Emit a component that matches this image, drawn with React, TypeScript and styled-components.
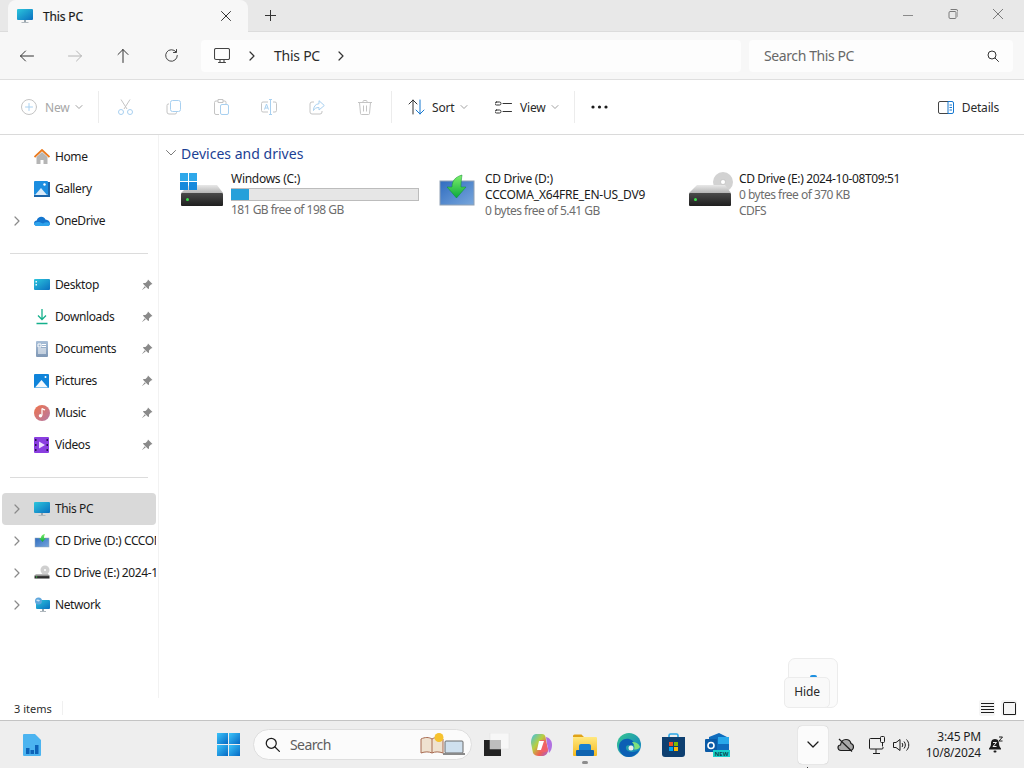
import React from "react";
import styled, { createGlobalStyle } from "styled-components";

const Global = createGlobalStyle`
  html, body { margin: 0; padding: 0; width: 1024px; height: 768px; overflow: hidden; background: #fff; }
  * { box-sizing: border-box; }
  body { font-family: "Noto Sans", "Liberation Sans", sans-serif; color: #1b1b1b; font-size: 12px; }
  svg { display: block; flex: none; }
`;

const Screen = styled.div`
  position: relative; width: 1024px; height: 768px; display: flex; flex-direction: column; overflow: hidden;
`;
const TitleBar = styled.div`
  height: 32px; background: #e8e8e8; display: flex; align-items: flex-end; padding-left: 8px; flex: none; border-bottom: 1px solid #dcdcdc;
`;
const Tab = styled.div`
  width: 240px; height: 32px; margin-bottom: -1px; background: #f7f7f7; border-radius: 8px 8px 0 0; display: flex; align-items: center; padding: 0 17px 0 9px;
`;
const TabTitle = styled.span`
  margin-left: 10px; flex: 1; font-size: 12px; letter-spacing: -0.15px; color: #1a1a1a; -webkit-text-stroke: 0.2px #1a1a1a;
`;
const NewTab = styled.div`
  margin: 0 0 7px 17px; width: 11px; height: 18px; display: flex; align-items: center;
`;
const WindowControls = styled.div`
  margin-left: auto; align-self: flex-start; display: flex; height: 32px; align-items: center; padding-right: 21px; gap: 35px; margin-top: -2px;
`;
const NavRow = styled.div`
  height: 48px; flex: none; background: #f7f7f7; border-bottom: 1px solid #dfdfdf; display: flex; align-items: center; padding: 0 11px 0 3px;
`;
const NavButton = styled.div`
  width: 48px; height: 32px; display: flex; align-items: center; justify-content: center;
`;
const AddressBox = styled.div`
  width: 540px; height: 32px; margin-left: 6px; background: #fdfdfd; border-radius: 4px; display: flex; align-items: center; padding-left: 13px;
`;
const CrumbGap = styled.span`
  width: 18px; flex: none;
`;
const Crumb = styled.span`
  font-size: 14px; color: #2b2b2b; margin: 0 17px 0 18px; letter-spacing: -0.25px;
`;
const SearchBox = styled.div`
  width: 264px; height: 32px; margin-left: 8px; background: #fdfdfd; border-radius: 4px; display: flex; align-items: center; justify-content: space-between; padding: 0 14px 0 15px;
  font-size: 14px; letter-spacing: -0.4px; color: #686868;
`;
const CommandBar = styled.div`
  height: 55px; flex: none; background: #fff; border-bottom: 1px solid #dadada; display: flex; align-items: center; padding-left: 21px; font-size: 12px;
`;
const CmdLabel = styled.span<{ $off?: boolean; $gap?: number }>`
  color: ${(p) => (p.$off ? "#a6a6a6" : "#2a2a2a")}; margin: 0 5px 0 ${(p) => p.$gap ?? 7}px; letter-spacing: -0.15px;
`;
const CmdGroup = styled.div<{ $w: number; $pad?: number }>`
  width: ${(p) => p.$w}px; padding-left: ${(p) => p.$pad ?? 0}px; display: flex; align-items: center; flex: none;
`;
const CmdIcon = styled.div`
  width: 48px; height: 32px; display: flex; align-items: center; justify-content: center; flex: none;
`;
const Sep = styled.div<{ $after?: number }>`
  width: 1px; height: 32px; background: #ececec; flex: none; margin-right: ${(p) => p.$after ?? 0}px;
`;
const SepSpace = styled.span`
  width: 2px; flex: none;
`;
const DetailsButton = styled.div`
  margin-left: auto; padding-right: 25px; display: flex; align-items: center;
`;
const DetailsLabel = styled.span`
  margin-left: 8px; color: #2a2a2a; letter-spacing: -0.2px;
`;
const Body = styled.div`
  flex: 1; display: flex; min-height: 0;
`;
const Sidebar = styled.nav`
  width: 159px; flex: none; border-right: 1px solid #f2f2f2; padding: 6px 2px 0; display: flex; flex-direction: column; height: 563px;
`;
const NavItem = styled.div<{ $active?: boolean }>`
  height: 32px; flex: none; display: flex; align-items: center; border-radius: 4px; background: ${(p) => (p.$active ? "#d9d9d9" : "transparent")}; overflow: hidden; position: relative;
`;
const Chevron = styled.div`
  width: 32px; display: flex; justify-content: center; padding-right: 3px; flex: none;
`;
const NavLabel = styled.span`
  margin-left: 5px; padding-bottom: 2px; white-space: nowrap; overflow: hidden; letter-spacing: -0.4px; color: #1b1b1b; flex: 1;
`;
const Pin = styled.div`
  margin-right: 3px; flex: none;
`;
const Divider = styled.div`
  height: 32px; flex: none; display: flex; align-items: center; padding: 0 8px;
  &::after { content: ""; flex: 1; height: 1px; background: #dcdcdc; }
`;
const Main = styled.main`
  flex: 1; padding: 7px 0 0 7px; min-width: 0;
`;
const GroupHeader = styled.div`
  display: flex; align-items: center; gap: 5px; height: 22px; font-size: 14px; color: #1c3f94; letter-spacing: 0.02px;
`;
const DriveGrid = styled.div`
  display: grid; grid-template-columns: repeat(3, 254px); margin: 7px 0 0 14px;
`;
const Drive = styled.div`
  display: flex; height: 48px; font-size: 12px; line-height: 16px;
`;
const DriveIconSlot = styled.div`
  width: 51px; flex: none; height: 40px; padding-top: 1px;
`;
const DriveText = styled.div`
  min-width: 0; white-space: nowrap;
`;
const DriveName = styled.div<{ $spacing?: number }>`
  color: #1a1a1a; letter-spacing: ${(p) => p.$spacing ?? -0.28}px;
`;
const DriveNote = styled.div`
  color: #6d6d6d; letter-spacing: -0.52px;
`;
const Meter = styled.div`
  width: 188px; height: 13px; background: #e6e6e6; border: 1px solid #bcbcbc; margin: 1px 0; border-width: 1px 1px 1px 0;
`;
const MeterFill = styled.div`
  height: 100%; background: #26a0da;
`;
const StatusBar = styled.div`
  height: 22px; flex: none; display: flex; align-items: center; padding: 0 7px 2px 14px; font-size: 11px; color: #2c2c2c; position: relative;
`;
const StatusSep = styled.span`
  width: 1px; height: 14px; margin-left: 10px; background: #f0f0f0;
`;
const ViewToggles = styled.div`
  margin-left: auto; display: flex; gap: 6px;
`;
const ViewToggle = styled.div`
  width: 16px; height: 16px; background: #f5f5f5; border-radius: 2px; display: flex; align-items: center; justify-content: center;
`;
const Taskbar = styled.footer`
  height: 48px; flex: none; background: #eeeeee; border-top: 1px solid #c4c4c4; display: flex; align-items: center; position: relative;
`;
const TaskSlot = styled.div<{ $w: number; $pad?: number }>`
  width: ${(p) => p.$w}px; padding-left: ${(p) => p.$pad ?? 0}px; height: 47px; flex: none; display: flex; align-items: center; justify-content: center; position: relative;
`;
const RunDot = styled.div`
  position: absolute; left: 50%; margin-left: -3px; bottom: 4px; width: 6px; height: 3px; border-radius: 2px; background: #8c8c8c;
`;
const TaskSearch = styled.div`
  width: 219px; height: 31px; margin: 0 3px 0 3px; flex: none; background: #fbfbfb; border: 1px solid #dedede; border-radius: 16px; display: flex; align-items: center; padding: 0 5px 0 11px; font-size: 14px; color: #5e5e5e; letter-spacing: -0.6px;
`;
const TaskSearchText = styled.span`
  margin-left: 10px; padding-bottom: 1px; flex: 1;
`;
const TrayMore = styled.div`
  width: 30px; height: 38px; margin-left: 59px; background: #fbfbfb; border-radius: 4px; box-shadow: 0 0 1px rgba(0,0,0,.3); display: flex; align-items: center; justify-content: center; flex: none; position: relative;
  &::after { content: ""; position: absolute; left: 9px; bottom: -4px; width: 1px; height: 1px; background: #333; }
`;
const Clock = styled.div`
  width: 56px; margin-left: 14px; text-align: right; font-size: 12px; line-height: 16px; color: #1e1e1e; letter-spacing: -0.2px; flex: none;
`;
const FlyoutBack = styled.div`
  position: absolute; left: 788px; top: 658px; width: 50px; height: 50px; background: #fbfbfb; border: 1px solid #ececec; border-radius: 7px;
`;
const Tooltip = styled.div`
  position: absolute; left: 784px; top: 677px; width: 46px; height: 31px; background: #f9f9f9; border: 1px solid #ececec; border-radius: 5px; font-size: 12px; display: flex; align-items: center; justify-content: center; padding-bottom: 2px; color: #2a2a2a; letter-spacing: -0.1px;
`;
const FlyoutBlip = styled.div`
  position: absolute; left: 810px; top: 675px; width: 7px; height: 2px; background: #1e90e0; border-radius: 3px 3px 0 0;
`;

/* ---------- icons ---------- */
const Line = ({ d, c = "#1f1f1f", w = 16, h = 16, vb = "0 0 16 16", sw = 1 }: { d: string; c?: string; w?: number; h?: number; vb?: string; sw?: number }) => (
  <svg width={w} height={h} viewBox={vb} fill="none" stroke={c} strokeWidth={sw} strokeLinecap="round" strokeLinejoin="round"><path d={d} /></svg>
);
const Defs = () => (
  <svg width="0" height="0" style={{ position: "absolute" }}>
    <defs>
      <linearGradient id="mon" x1="0" y1="0" x2="1" y2="1"><stop offset="0" stopColor="#2cc6dc" /><stop offset="1" stopColor="#0a6fc0" /></linearGradient>
      <linearGradient id="win" x1="0" y1="0" x2="1" y2="1"><stop offset="0" stopColor="#3bc4fa" /><stop offset="1" stopColor="#0669c4" /></linearGradient>
      <linearGradient id="diskTop" x1="0" y1="0" x2="0" y2="1"><stop offset="0" stopColor="#e8e8e8" /><stop offset="1" stopColor="#b4b4b4" /></linearGradient>
      <linearGradient id="diskBody" x1="0" y1="0" x2="0" y2="1"><stop offset="0" stopColor="#4a4a4a" /><stop offset="1" stopColor="#1e1e1e" /></linearGradient>
      <linearGradient id="grn" x1="0" y1="0" x2="0" y2="1"><stop offset="0" stopColor="#7ef06a" /><stop offset="1" stopColor="#0aa83c" /></linearGradient>
      <linearGradient id="scr" x1="0" y1="0" x2="1" y2="1"><stop offset="0" stopColor="#2f6cc0" /><stop offset="1" stopColor="#79a7dc" /></linearGradient>
      <linearGradient id="music" x1="0" y1="0" x2="1" y2="1"><stop offset="0" stopColor="#f0734a" /><stop offset="1" stopColor="#b47aa8" /></linearGradient>
      <linearGradient id="folder" x1="0" y1="0" x2="0" y2="1"><stop offset="0" stopColor="#ffe880" /><stop offset="1" stopColor="#f6b91e" /></linearGradient>
      <linearGradient id="cop" x1="0" y1="0" x2="1" y2="1"><stop offset="0" stopColor="#3fc0e8" /><stop offset=".4" stopColor="#b8d040" /><stop offset=".7" stopColor="#f06050" /><stop offset="1" stopColor="#a060d8" /></linearGradient>
      <linearGradient id="edge" x1="0" y1="0" x2="1" y2="1"><stop offset="0" stopColor="#37c890" /><stop offset="1" stopColor="#0c78c8" /></linearGradient>
      <linearGradient id="docs" x1="0" y1="0" x2="0" y2="1"><stop offset="0" stopColor="#a9bfd8" /><stop offset="1" stopColor="#7f97b5" /></linearGradient>
    </defs>
  </svg>
);
const MonitorColor = ({ s = 16 }: { s?: number }) => (
  <svg width={s} height={s} viewBox="0 0 16 16">
    <rect x="0" y="1" width="16" height="11" rx="1" fill="url(#mon)" />
    <rect x="7" y="12" width="2" height="2" fill="#9aa6ae" /><rect x="4.5" y="14" width="7" height="1" fill="#b0b8be" />
  </svg>
);
const HomeIcon = () => (
  <svg width="16" height="16" viewBox="0 0 16 16">
    <path d="M2.5 8 8 3l5.5 5v7h-4v-4h-3v4h-4z" fill="#b5b5b5" />
    <path d="M.5 8 8 1l7.5 7" fill="none" stroke="#ea7a1e" strokeWidth="1.8" />
  </svg>
);
const GalleryIcon = () => (
  <svg width="16" height="16" viewBox="0 0 16 16">
    <rect x="14" y="1" width="2" height="15" fill="#1c64a8" />
    <rect x="0" y="14" width="16" height="2" fill="#1c64a8" />
    <rect x="0" y="0" width="14" height="14" rx="1" fill="#1c8ee0" />
    <path d="M1 14 7 7l6 7z" fill="#dcebf8" /><circle cx="10.5" cy="3.5" r="1.2" fill="#fff" />
  </svg>
);
const CloudIcon = () => (
  <svg width="16" height="16" viewBox="0 0 16 16">
    <path d="M3 13C1 13 0 11.600 0 10.300 0 8.800 1.200 7.600 2.700 7.600 3.400 5 5.300 3.800 7.300 3.800c2 0 3.400 1 4.100 2.800C14 6.700 16 8.700 16 10.500 16 12 15 13 13.500 13z" fill="#1476cf" />
    <path d="M3 13c-1.700 0-3-1-3-2.700 3-2 6-1.500 9 .3 2.500-1.500 5-1.800 7 0C16 12 15 13 13.500 13z" fill="#2ea3ec" />
  </svg>
);
const DesktopIcon = () => (
  <svg width="16" height="16" viewBox="0 0 16 16">
    <rect y="2" width="16" height="11" rx="1" fill="url(#mon)" />
    <rect x="1.500" y="4" width="1.500" height="1.500" fill="#e6f6fc" /><rect x="1.500" y="7" width="1.500" height="1.500" fill="#e6f6fc" />
  </svg>
);
const DownloadIcon = () => (
  <svg width="16" height="16" viewBox="0 0 16 16" fill="none" stroke="#14b08c" strokeWidth="1.300">
    <path d="M8 0v10M4 6.500 8 10.500l4-4" /><path d="M2.500 14.500h11" strokeWidth="1.500" />
  </svg>
);
const DocsIcon = () => (
  <svg width="16" height="16" viewBox="0 0 16 16">
    <rect x="2" y="0" width="12" height="16" rx="1" fill="url(#docs)" />
    <path d="M4 3h3v3H4zM8 3.500h4M8 5.500h4M4 8h8M4 10h8M4 12h8" stroke="#fff" strokeWidth="1" fill="none" />
  </svg>
);
const PicturesIcon = () => (
  <svg width="16" height="16" viewBox="0 0 16 16">
    <rect y="1" width="15" height="14" rx="1" fill="#0f84da" />
    <path d="M1 14.500 7.500 7l6.500 7.500z" fill="#f4f9fd" /><circle cx="11.500" cy="4" r="1" fill="#fff" />
  </svg>
);
const MusicIcon = () => (
  <svg width="16" height="16" viewBox="0 0 16 16">
    <circle cx="8" cy="8" r="8" fill="url(#music)" />
    <path d="M8 3.500v7" stroke="#fff" strokeWidth="1.200" /><path d="M8 3.500c1 1 2.300 1 3 1.500" stroke="#fff" strokeWidth="1.200" fill="none" />
    <circle cx="6.500" cy="10.800" r="1.700" fill="#fff" />
  </svg>
);
const VideoIcon = () => (
  <svg width="16" height="16" viewBox="0 0 16 16">
    <rect width="15" height="16" x="0" rx="1" fill="#8a3ee0" />
    <path d="M1 2h1.500v2H1zM1 7h1.500v2H1zM1 12h1.500v2H1zM12.500 2H14v2h-1.500zM12.500 7H14v2h-1.500zM12.500 12H14v2h-1.500z" fill="#2a1450" />
    <path d="M5 4.500 11 8l-6 3.500z" fill="#ecdcff" />
  </svg>
);
const MiniD = () => (
  <svg width="16" height="16" viewBox="0 0 16 16">
    <rect x="1" y="5" width="14" height="9" fill="url(#scr)" stroke="#9ab" strokeWidth=".5" />
    <path d="M11 1 C8 1.500 7 3 7 5H5l3.500 4L12 5h-2c0-1.500.3-2.500 1-4z" fill="url(#grn)" />
  </svg>
);
const MiniE = () => (
  <svg width="16" height="16" viewBox="0 0 16 16">
    <circle cx="11" cy="5" r="4.500" fill="#cfcfcf" /><circle cx="11" cy="5" r="1" fill="#fff" />
    <path d="M2 9h12l1.500 1.500h-15z" fill="#b8b8b8" /><rect x="0.500" y="10.500" width="15" height="3" fill="url(#diskBody)" />
    <rect x="2" y="11.500" width="1.200" height="1" fill="#3de04a" />
  </svg>
);
const NetworkIcon = () => (
  <svg width="16" height="16" viewBox="0 0 16 16">
    <rect x="2" y="3" width="14" height="9" rx="1" fill="url(#mon)" />
    <rect x="8" y="12" width="2" height="2" fill="#9aa6ae" /><rect x="6" y="14" width="6" height="1" fill="#b0b8be" />
    <circle cx="4.500" cy="4" r="3.500" fill="#5ea6dc" /><path d="M2 3c1.500-1 3-.5 4 .5-1 1.500-3 1-4-.5z" fill="#c7e2f6" />
  </svg>
);
const PinIcon = () => (
  <svg width="12" height="12" viewBox="0 0 12 12"><path d="M7 .5 11.500 5 10 5.500 8 7.500 8 10 6.700 9.500 2.500 5.300 2 4 4.500 4 6.500 2zM3.800 7.200.8 11.200l4-3z" fill="#8a8a8a" /></svg>
);
const ChevR = ({ c = "#8a8a8a" }: { c?: string }) => <Line w={8} h={10} vb="0 0 8 10" c={c} sw={1.200} d="M2 1l4 4-4 4" />;
const ChevDown = () => <Line w={8} h={6} vb="0 0 8 6" c="#a0a0a0" d="M1 1.500 4 4.500 7 1.500" />;

const WinLogo = ({ s }: { s: number }) => (
  <svg width={s} height={s} viewBox="0 0 23 23">
    <rect width="11" height="11" fill="url(#win)" /><rect x="12" width="11" height="11" fill="url(#win)" />
    <rect y="12" width="11" height="11" fill="url(#win)" /><rect x="12" y="12" width="11" height="11" fill="url(#win)" />
  </svg>
);
const HddBase = () => (
  <g>
    <path d="M9 13h28l6 8H1z" fill="url(#diskTop)" />
    <rect x="1" y="21" width="42" height="13" rx="1" fill="url(#diskBody)" />
    <rect x="6" y="26" width="3" height="3" rx="1.500" fill="#39e04a" />
  </g>
);
const DriveC = () => (
  <svg width="44" height="36" viewBox="0 0 44 36">
    <HddBase />
    <g transform="translate(0,1)">
      <rect width="8" height="8" fill="#2ea8ea" /><rect x="9" width="8" height="8" fill="#2ea8ea" /><rect y="9" width="8" height="8" fill="#1689dc" /><rect x="9" y="9" width="8" height="8" fill="#1689dc" />
    </g>
  </svg>
);
const DriveD = () => (
  <svg width="44" height="36" viewBox="0 0 44 36">
    <rect x="6" y="9" width="34" height="24" fill="url(#scr)" stroke="#8fa0b4" />
    <path d="M28 3C21 5 18 9 18 15h-5l9.500 11L32 15h-5c0-5 .5-8 1-12z" fill="url(#grn)" stroke="#0a8c34" strokeWidth=".5" />
  </svg>
);
const DriveE = () => (
  <svg width="46" height="36" viewBox="0 0 46 36">
    <circle cx="35" cy="10" r="10" fill="#d2d2d2" /><circle cx="35" cy="10" r="2.500" fill="#fff" stroke="#aaa" strokeWidth=".5" />
    <HddBase />
  </svg>
);
const TaskWidgets = () => (
  <svg width="18" height="22" viewBox="0 0 18 22">
    <path d="M1 0h11l6 6v15a1 1 0 0 1-1 1H1a1 1 0 0 1-1-1V1a1 1 0 0 1 1-1z" fill="#4cb4f0" />
    <rect x="3" y="14" width="3.500" height="6" fill="#0d63b8" /><rect x="7.500" y="16" width="3.500" height="4" fill="#0d63b8" /><rect x="12" y="11" width="3.500" height="9" fill="#0d63b8" />
  </svg>
);
const BookLaptop = () => (
  <svg width="46" height="24" viewBox="0 0 46 24">
    <path d="M1 6c4-2 8-2 11 0 3-2 7-2 11 0v14c-4-1.500-8-1.500-11 0-3-1.500-7-1.500-11 0z" fill="#efe2d0" stroke="#a86a50" />
    <path d="M12 6v14" stroke="#a86a50" />
    <circle cx="19" cy="4.500" r="4.500" fill="#f6c22e" />
    <rect x="25" y="8" width="18" height="12" rx="1" fill="#cfe0ee" stroke="#6a6a6a" />
    <rect x="23" y="20" width="22" height="2" fill="#8a8a8a" />
  </svg>
);
const TaskView = () => (
  <svg width="26" height="24" viewBox="0 0 26 24">
    <rect x="0" y="7" width="17" height="16" fill="#232323" />
    <rect x="6" y="0" width="19" height="16" fill="#f8f8f8" opacity=".9" stroke="#e0e0e0" strokeWidth=".5" />
    <rect x="6" y="7" width="11" height="9" fill="#bdbdbd" />
  </svg>
);
const Copilot = () => (
  <svg width="23" height="24" viewBox="0 0 23 24">
    <path d="M6 1h6c2 0 3 1 3.500 3L18 18c-.5 3-3 5-6 5H9c-3 0-5-1-6-3L1 10c0-5 2-9 5-9z" fill="url(#cop)" />
    <path d="M10 7h5l3 9c.5 2-1 3-3 3h-5z" fill="#f25f6a" opacity=".85" />
    <path d="M16 4c4 1 6 4 6 8 0 3-1 6-3 8l-2-9z" fill="#b070e0" />
    <path d="M9 8h5l-3 9H7z" fill="#fff" />
  </svg>
);
const Explorer = () => (
  <svg width="24" height="22" viewBox="0 0 24 22">
    <path d="M0 2a1.500 1.500 0 0 1 1.500-1.500h7L11 3h-11z" fill="#e0a218" />
    <rect y="3" width="24" height="19" rx="1" fill="url(#folder)" />
    <path d="M6 12a2 2 0 0 1 2-2h8a2 2 0 0 1 2 2v4H6z" fill="#1a7fd0" /><rect x="3" y="16" width="18" height="6" rx="1" fill="#0f63b0" />
  </svg>
);
const Edge = () => (
  <svg width="24" height="24" viewBox="0 0 24 24">
    <circle cx="12" cy="12" r="12" fill="url(#edge)" />
    <path d="M2 14c0-6 5-9 10-8 4 1 6 4 5 6-3 1-7-1-8 2-1 3 3 5 7 5 2 0 4-1 6-2-2 4-6 7-10 7-6 0-10-5-10-10z" fill="#0b5fb4" />
    <path d="M15 9c3 0 7 1 8 5-1 2-3 2.500-6 2.500 1-2 .5-5-2-7.500z" fill="#7fe07c" />
    <circle cx="14" cy="15" r="2.500" fill="#eeeeee" />
  </svg>
);
const Store = () => (
  <svg width="23" height="24" viewBox="0 0 23 24">
    <path d="M7 5V2.500C7 1.500 7.500 1 8.500 1h6c1 0 1.500.5 1.500 1.500V5" fill="none" stroke="#2aa6e8" strokeWidth="1.600" />
    <path d="M0 4h23v17a3 3 0 0 1-3 3H3a3 3 0 0 1-3-3z" fill="#0e3f70" />
    <rect x="7" y="9" width="4" height="4" fill="#f25022" /><rect x="12" y="9" width="4" height="4" fill="#7fba00" />
    <rect x="7" y="14" width="4" height="4" fill="#00a4ef" /><rect x="12" y="14" width="4" height="4" fill="#ffb900" />
  </svg>
);
const Outlook = () => (
  <svg width="25" height="24" viewBox="0 0 25 24">
    <path d="M4 4 14 0l10 5v13H4z" fill="#0f6cbd" /><path d="M13 4h11v7H13z" fill="#28a8ea" />
    <rect x="0" y="6" width="12" height="13" rx="1" fill="#0a5aa6" />
    <circle cx="6" cy="12.500" r="3" fill="none" stroke="#fff" strokeWidth="1.600" />
    <rect x="8" y="17" width="17" height="7" fill="#18d0cc" />
    <text x="16.500" y="22.800" textAnchor="middle" fontSize="6" fontWeight="700" fontFamily="Noto Sans, sans-serif" fill="#0a4a52">NEW</text>
  </svg>
);
const CloudOff = () => (
  <svg width="17" height="14" viewBox="0 0 17 14" fill="#a8a8a8" stroke="#1c1c1c" strokeWidth="1.200">
    <path d="M4 12.500C2 12.500 1 11 1 9.500 1 8 2 7 3.500 7 4 3.500 6.500 1.500 9 1.500c2.500 0 4.500 2 5 4 1.500.5 2.500 1.800 2.500 3.300 0 2-1.500 3.700-3.500 3.700z" />
    <path d="M2 1l13 12.500" fill="none" />
  </svg>
);
const NetCable = () => (
  <svg width="17" height="18" viewBox="0 0 17 18" fill="none" stroke="#1c1c1c" strokeWidth="1">
    <path d="M11 2.500H1.500a1 1 0 0 0-1 1V12a1 1 0 0 0 1 1H13a1 1 0 0 0 1-1v-1" /><path d="M7 13v4M4 17.500h7" />
    <rect x="11.500" y=".5" width="4" height="6" rx="1" /><path d="M13.500 6.500v4" />
  </svg>
);
const Speaker = () => (
  <svg width="17" height="14" viewBox="0 0 17 14" fill="none" stroke="#1c1c1c" strokeWidth="1">
    <path d="M.5 4.500h2.500L7 1.500v11L3 9.500H.5z" /><path d="M9 5c1 1.200 1 2.800 0 4M11 3.500c1.800 2 1.800 5 0 7M13.500 1.500c3 3 3 8 0 11" />
  </svg>
);
const Bell = () => (
  <svg width="16" height="18" viewBox="0 0 16 18">
    <path d="M7 3C3.500 3 3 6 3 8c0 2-1 3-2 4.500v1h12v-1c-1-1.500-2-2.500-2-4.500 0-2-.5-5-4-5z" fill="#1c1c1c" />
    <rect x="5.500" y="14.500" width="3" height="2" rx="1" fill="#1c1c1c" />
    <path d="M5 6.500h3.500L5 10.500h3.500" stroke="#eee" strokeWidth="1" fill="none" />
    <path d="M11 1h3.500L11 5h3.500" stroke="#1c1c1c" strokeWidth="1" fill="none" />
  </svg>
);
const Search = ({ s = 12, c = "#333" }: { s?: number; c?: string }) => (
  <svg width={s} height={s} viewBox="0 0 12 12" fill="none" stroke={c} strokeWidth="1"><circle cx="5" cy="5" r="4" /><path d="M8 8l3.500 3.500" strokeLinecap="round" /></svg>
);

const blue = "#a8d0f0";
const off = "#c4c4c4";

const navTop = [
  { label: "Home", icon: <HomeIcon /> },
  { label: "Gallery", icon: <GalleryIcon /> },
  { label: "OneDrive", icon: <CloudIcon />, chev: true },
];
const navPinned = [
  { label: "Desktop", icon: <DesktopIcon /> },
  { label: "Downloads", icon: <DownloadIcon /> },
  { label: "Documents", icon: <DocsIcon /> },
  { label: "Pictures", icon: <PicturesIcon /> },
  { label: "Music", icon: <MusicIcon /> },
  { label: "Videos", icon: <VideoIcon /> },
];
const navDevices = [
  { label: "This PC", icon: <MonitorColor />, active: true },
  { label: "CD Drive (D:) CCCOMA_X64FRE_EN-US_DV9", icon: <MiniD /> },
  { label: "CD Drive (E:) 2024-10-08T09:51", icon: <MiniE /> },
  { label: "Network", icon: <NetworkIcon /> },
];

export default function App() {
  return (
    <Screen>
      <Global />
      <Defs />
      <TitleBar>
        <Tab>
          <MonitorColor />
          <TabTitle>This PC</TabTitle>
          <Line w={10} h={10} vb="0 0 10 10" c="#333" d="M.5.5l9 9M9.500.5l-9 9" />
        </Tab>
        <NewTab><Line w={11} h={11} vb="0 0 11 11" c="#333" d="M5.500 0v11M0 5.500h11" /></NewTab>
        <WindowControls>
          <Line w={10} h={10} vb="0 0 10 10" c="#8a8a8a" d="M0 6.500h10" />
          <Line w={10} h={10} vb="0 0 10 10" c="#7a7a7a" d="M1 3.500a1 1 0 0 1 1-1h5a1 1 0 0 1 1 1v5a1 1 0 0 1-1 1H2a1 1 0 0 1-1-1zM3 .5h5a2 2 0 0 1 2 2v5" />
          <Line w={10} h={10} vb="0 0 10 10" c="#7a7a7a" d="M0 0l10 10M10 0 0 10" />
        </WindowControls>
      </TitleBar>
      <NavRow>
        <NavButton><Line w={14} h={12} vb="0 0 14 12" c="#333" d="M13.500 6H.5M5.500 1 .5 6l5 5" /></NavButton>
        <NavButton><Line w={14} h={12} vb="0 0 14 12" c="#b4b4b4" d="M.5 6h13M8.500 1l5 5-5 5" /></NavButton>
        <NavButton><Line w={12} h={14} vb="0 0 12 14" c="#333" d="M6 13.500V.5M1 5.500 6 .5l5 5" /></NavButton>
        <NavButton><Line w={13} h={13} vb="0 0 13 13" c="#444" d="M11 2.800A5.800 5.800 0 1 0 12.300 6.500M11.500.5v3h-3" /></NavButton>
        <AddressBox>
          <Line w={16} h={15} vb="0 0 16 15" c="#444" sw={1.100} d="M2 .5h12A1.500 1.500 0 0 1 15.500 2v8a1.500 1.500 0 0 1-1.500 1.500H2A1.500 1.500 0 0 1 .5 10V2A1.500 1.500 0 0 1 2 .5zM6 11.500v2.500M10 11.500v2.500M4.500 14.500h7" />
          <CrumbGap />
          <ChevR c="#333" />
          <Crumb>This PC</Crumb>
          <ChevR c="#333" />
        </AddressBox>
        <SearchBox>
          <span>Search This PC</span>
          <Search />
        </SearchBox>
      </NavRow>
      <CommandBar>
        <CmdGroup $w={77}>
          <svg width="16" height="16" viewBox="0 0 16 16" fill="none" strokeLinecap="round"><circle cx="8" cy="8" r="7.500" stroke={off} /><path d="M8 4.500v7M4.500 8h7" stroke={blue} /></svg>
          <CmdLabel $off $gap={8}>New</CmdLabel>
          <ChevDown />
        </CmdGroup>
        <Sep $after={2} />
        <CmdIcon>
          <svg width="15" height="16" viewBox="0 0 15 16" fill="none" strokeWidth="1"><path d="M3 .5 9 10M12 .5 6 10" stroke={off} /><circle cx="3" cy="13" r="2.500" stroke={blue} /><circle cx="12" cy="13" r="2.500" stroke={blue} /></svg>
        </CmdIcon>
        <CmdIcon>
          <svg width="15" height="15" viewBox="0 0 15 15" fill="none"><path d="M3 4H2a1.500 1.500 0 0 0-1 1.500V12a2 2 0 0 0 2 2h6a1.500 1.500 0 0 0 1.500-1.500V12" stroke={off} /><rect x="4.500" y=".5" width="10" height="11" rx="2" stroke={blue} /></svg>
        </CmdIcon>
        <CmdIcon>
          <svg width="15" height="16" viewBox="0 0 15 16" fill="none"><path d="M4 2H2a1.500 1.500 0 0 0-1.500 1.500V14A1.500 1.500 0 0 0 2 15.500h3M4 .5h5v3H4zM9 2h2a1.500 1.500 0 0 1 1 1.500V5" stroke={off} /><rect x="6.500" y="5.500" width="8" height="10" rx="1.500" stroke={blue} /></svg>
        </CmdIcon>
        <CmdIcon>
          <svg width="16" height="16" viewBox="0 0 16 16" fill="none"><path d="M7 3H2a1.500 1.500 0 0 0-1.500 1.500v7A1.500 1.500 0 0 0 2 13h5M12 3h2a1.500 1.500 0 0 1 1.500 1.500v7A1.500 1.500 0 0 1 14 13h-2" stroke={off} /><path d="M8 .5h3M8 15.500h3M9.500.5v15" stroke={blue} /><path d="M3.500 10.500 5.500 5l2 5.500M4.200 9h2.600" stroke={blue} /></svg>
        </CmdIcon>
        <CmdIcon>
          <svg width="16" height="15" viewBox="0 0 16 15" fill="none"><path d="M5 2H3a2 2 0 0 0-2 2v8a2 2 0 0 0 2 2h8a2 2 0 0 0 2-2v-1" stroke={off} /><path d="M10 .7 15.300 5.500 10 10V7.500c-3 0-4.500 1-5.500 3 0-4 2-6.500 5.500-6.800z" stroke={blue} /></svg>
        </CmdIcon>
        <CmdIcon>
          <svg width="14" height="15" viewBox="0 0 14 15" fill="none" stroke={off}><path d="M0 2.500h14M5 2.500V1.500a1 1 0 0 1 1-1h2a1 1 0 0 1 1 1v1M1.500 2.500l1 11a1 1 0 0 0 1 1h7a1 1 0 0 0 1-1l1-11M5.500 5.500v6M8.500 5.500v6" /></svg>
        </CmdIcon>
        <SepSpace />
        <Sep />
        <CmdGroup $w={88} $pad={16}>
          <svg width="17" height="16" viewBox="0 0 17 16" fill="none" strokeLinecap="round" strokeLinejoin="round"><path d="M5 15V1M1 5l4-4 4 4" stroke="#333" /><path d="M12 1v14M8 11l4 4 4-4" stroke="#1678d0" /></svg>
          <CmdLabel>Sort</CmdLabel>
          <ChevDown />
        </CmdGroup>
        <CmdGroup $w={94} $pad={15}>
          <Line w={17} h={13} vb="0 0 17 13" c="#333" d="M1.500 1h3a1 1 0 0 1 0 3h-3a1 1 0 0 1 0-3zM1.500 9h3a1 1 0 0 1 0 3h-3a1 1 0 0 1 0-3zM8 2.500h8.500M8 10.500h8.500" />
          <CmdLabel $gap={8}>View</CmdLabel>
          <ChevDown />
        </CmdGroup>
        <Sep />
        <CmdGroup $w={60} $pad={16}>
          <svg width="17" height="4" viewBox="0 0 17 4" fill="#1c1c1c"><circle cx="2" cy="2" r="1.600" /><circle cx="8.500" cy="2" r="1.600" /><circle cx="15" cy="2" r="1.600" /></svg>
        </CmdGroup>
        <DetailsButton>
          <svg width="16" height="13" viewBox="0 0 16 13" fill="none"><path d="M10 .5H2A1.500 1.500 0 0 0 .5 2v9A1.500 1.500 0 0 0 2 12.500h8" stroke="#444" /><path d="M10 .5h4A1.500 1.500 0 0 1 15.500 2v9a1.500 1.500 0 0 1-1.500 1.500h-4zM11.500 4h2.500M11.500 6.500h2.500M11.500 9h2.500" stroke="#1678d0" /></svg>
          <DetailsLabel>Details</DetailsLabel>
        </DetailsButton>
      </CommandBar>
      <Body>
        <Sidebar>
          {navTop.map((n) => (
            <NavItem key={n.label}>
              <Chevron>{n.chev && <ChevR />}</Chevron>
              {n.icon}
              <NavLabel>{n.label}</NavLabel>
            </NavItem>
          ))}
          <Divider />
          {navPinned.map((n) => (
            <NavItem key={n.label}>
              <Chevron />
              {n.icon}
              <NavLabel>{n.label}</NavLabel>
              <Pin><PinIcon /></Pin>
            </NavItem>
          ))}
          <Divider />
          {navDevices.map((n) => (
            <NavItem key={n.label} $active={n.active}>
              <Chevron><ChevR /></Chevron>
              {n.icon}
              <NavLabel>{n.label}</NavLabel>
            </NavItem>
          ))}
        </Sidebar>
        <Main>
          <GroupHeader>
            <Line w={10} h={6} vb="0 0 10 6" c="#7a7a7a" d="M.5.5 5 5 9.500.5" />
            <span>Devices and drives</span>
          </GroupHeader>
          <DriveGrid>
            <Drive>
              <DriveIconSlot><DriveC /></DriveIconSlot>
              <DriveText>
                <DriveName>Windows (C:)</DriveName>
                <Meter><MeterFill style={{ width: `${(17 / 198) * 100 + 1}%` }} /></Meter>
                <DriveNote>181 GB free of 198 GB</DriveNote>
              </DriveText>
            </Drive>
            <Drive>
              <DriveIconSlot><DriveD /></DriveIconSlot>
              <DriveText>
                <DriveName>CD Drive (D:)</DriveName>
                <DriveName $spacing={-0.2}>CCCOMA_X64FRE_EN-US_DV9</DriveName>
                <DriveNote>0 bytes free of 5.41 GB</DriveNote>
              </DriveText>
            </Drive>
            <Drive>
              <DriveIconSlot><DriveE /></DriveIconSlot>
              <DriveText>
                <DriveName $spacing={-0.38}>CD Drive (E:) 2024-10-08T09:51</DriveName>
                <DriveNote>0 bytes free of 370 KB</DriveNote>
                <DriveNote>CDFS</DriveNote>
              </DriveText>
            </Drive>
          </DriveGrid>
        </Main>
      </Body>
      <StatusBar>
        <span>3 items</span>
        <StatusSep />
        <ViewToggles>
          <ViewToggle><Line w={13} h={12} vb="0 0 13 12" c="#1c1c1c" d="M0 1.500h13M0 4.500h13M0 7.500h13M0 10.500h13" /></ViewToggle>
          <ViewToggle><Line w={13} h={13} vb="0 0 13 13" c="#1c1c1c" d="M1.500.5h10a1 1 0 0 1 1 1v11H.5v-11a1 1 0 0 1 1-1z" /></ViewToggle>
        </ViewToggles>
      </StatusBar>
      <Taskbar>
        <TaskSlot $w={64}><TaskWidgets /></TaskSlot>
        <TaskSlot $w={186} $pad={142}><WinLogo s={23} /></TaskSlot>
        <TaskSearch>
          <Search s={15} c="#1c1c1c" />
          <TaskSearchText>Search</TaskSearchText>
          <BookLaptop />
        </TaskSearch>
        <TaskSlot $w={44}><TaskView /></TaskSlot>
        <TaskSlot $w={44}><Copilot /></TaskSlot>
        <TaskSlot $w={44}><Explorer /><RunDot /></TaskSlot>
        <TaskSlot $w={44}><Edge /></TaskSlot>
        <TaskSlot $w={44}><Store /></TaskSlot>
        <TaskSlot $w={44}><Outlook /></TaskSlot>
        <TrayMore><Line w={12} h={7} vb="0 0 12 7" c="#1c1c1c" sw={1.300} d="M1 1l5 5 5-5" /></TrayMore>
        <TaskSlot $w={35}><CloudOff /></TaskSlot>
        <TaskSlot $w={28}><NetCable /></TaskSlot>
        <TaskSlot $w={20}><Speaker /></TaskSlot>
        <Clock>3:45 PM<br />10/8/2024</Clock>
        <TaskSlot $w={30}><Bell /></TaskSlot>
      </Taskbar>
      <FlyoutBack />
      <FlyoutBlip />
      <Tooltip>Hide</Tooltip>
    </Screen>
  );
}
